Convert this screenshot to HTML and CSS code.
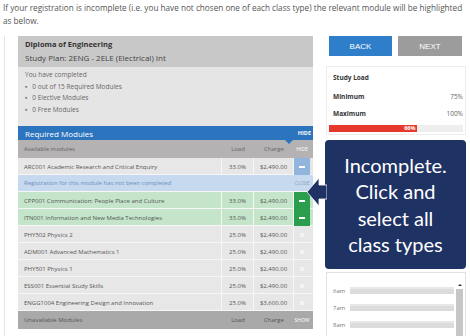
FILE: index.html
```html
<!DOCTYPE html>
<html lang="en">
<head>
  <meta charset="UTF-8">
  <meta name="viewport" content="width=device-width, initial-scale=1.0">
  <title>Study Plan Registration</title>
  <link rel="stylesheet" href="styles.css">
</head>
<body>
  <p class="intro">If your registration is incomplete (i.e. you have not chosen one of each class type) the relevant module will be highlighted as below.</p>

  <div class="layout">
    <div class="plan">
      <div class="plan-head">
        <h3>Diploma of Engineering</h3>
        <p>Study Plan: 2ENG - 2ELE (Electrical) Int</p>
      </div>
      <div class="completed">
        <p>You have completed</p>
        <ul>
          <li>0 out of 15 Required Modules</li>
          <li>0 Elective Modules</li>
          <li>0 Free Modules</li>
        </ul>
      </div>

      <div class="section-bar">
        <span>Required Modules</span>
        <span class="toggle">HIDE</span>
      </div>
      <div class="row head">
        <div class="cell name">Available modules</div>
        <div class="cell num">Load</div>
        <div class="cell num">Charge</div>
        <div class="cell act small">HIDE</div>
      </div>
      <div class="row">
        <div class="cell name">ARC001 Academic Research and Critical Enquiry</div>
        <div class="cell num">33.0%</div>
        <div class="cell num">$2,490.00</div>
        <div class="cell act"><span class="btn minus pending"></span></div>
      </div>
      <div class="row notice">
        <div class="cell name wide">Registration for this module has not been completed</div>
        <div class="cell act small">CLOSE</div>
      </div>
      <div class="row done">
        <div class="cell name">CPP001 Communication: People Place and Culture</div>
        <div class="cell num">33.0%</div>
        <div class="cell num">$2,490.00</div>
        <div class="cell act"><span class="btn minus"></span></div>
      </div>
      <div class="row done">
        <div class="cell name">ITN001 Information and New Media Technologies</div>
        <div class="cell num">33.0%</div>
        <div class="cell num">$2,490.00</div>
        <div class="cell act"><span class="btn minus"></span></div>
      </div>
      <div class="row">
        <div class="cell name">PHY502 Physics 2</div>
        <div class="cell num">25.0%</div>
        <div class="cell num">$2,490.00</div>
        <div class="cell act"><span class="btn add"></span></div>
      </div>
      <div class="row">
        <div class="cell name">ADM001 Advanced Mathematics 1</div>
        <div class="cell num">25.0%</div>
        <div class="cell num">$2,490.00</div>
        <div class="cell act"><span class="btn add"></span></div>
      </div>
      <div class="row">
        <div class="cell name">PHY501 Physics 1</div>
        <div class="cell num">25.0%</div>
        <div class="cell num">$2,490.00</div>
        <div class="cell act"><span class="btn add"></span></div>
      </div>
      <div class="row">
        <div class="cell name">ESS001 Essential Study Skills</div>
        <div class="cell num">25.0%</div>
        <div class="cell num">$2,490.00</div>
        <div class="cell act"><span class="btn add"></span></div>
      </div>
      <div class="row">
        <div class="cell name">ENGG1004 Engineering Design and Innovation</div>
        <div class="cell num">25.0%</div>
        <div class="cell num">$3,600.00</div>
        <div class="cell act"><span class="btn add"></span></div>
      </div>
      <div class="row head unavailable">
        <div class="cell name">Unavailable Modules</div>
        <div class="cell num">Load</div>
        <div class="cell num">Charge</div>
        <div class="cell act small">SHOW</div>
      </div>
    </div>

    <div class="side">
      <div class="nav">
        <button class="nav-btn back">BACK</button>
        <button class="nav-btn next">NEXT</button>
      </div>

      <div class="load">
        <div class="load-row title">Study Load</div>
        <div class="load-row"><span>Minimum</span><span class="val">75%</span></div>
        <div class="load-row"><span>Maximum</span><span class="val">100%</span></div>
        <div class="bar"><div class="bar-fill" style="width: 66%">66%</div></div>
      </div>

      <div class="callout">
        <svg class="callout-arrow" width="20" height="30" viewBox="0 0 20 30">
          <polygon points="0,14 12,0 12,7 20,7 20,21 12,21 12,28" fill="#1f3264" stroke="#ffffff" stroke-width="0.8"/>
        </svg>
        <p>Incomplete. Click and select all class types</p>
      </div>

      <div class="calendar">
        <div class="hours">
          <div class="hour"><span>6am</span><div class="slot"></div></div>
          <div class="hour"><span>7am</span><div class="slot"></div></div>
          <div class="hour"><span>8am</span><div class="slot"></div></div>
        </div>
        <div class="scroll"><span class="scroll-up"></span><span class="thumb"></span></div>
      </div>
    </div>
  </div>
</body>
</html>
```

FILE: styles.css
```css
* {
  margin: 0;
  padding: 0;
  box-sizing: border-box;
}
body {
  font-family: 'Open Sans', sans-serif;
  background-color: #ffffff;
  color: #555;
  width: 470px;
  height: 336px;
  overflow: hidden;
}
.intro {
  font-size: 8.2px;
  line-height: 13px;
  padding: 1px 3px 0;
  margin-bottom: 9px;
  color: #555;
}
.layout {
  display: flex;
  padding-left: 4px;
}
.plan {
  width: 309px;
  padding-left: 13px;
  border-left: 1px solid #e4e4e4;
  padding-bottom: 6px;
}
.plan-head {
  background: #c9c8c8;
  height: 31px;
  padding: 3px 7px 0;
  color: #333;
}
.plan-head h3 {
  font-size: 7.5px;
  line-height: 11px;
  font-weight: 700;
}
.plan-head p {
  font-size: 8px;
  line-height: 15px;
  color: #444;
}
.completed {
  background: #e6e5e5;
  height: 59px;
  padding: 2px 7px 0;
  font-size: 6.5px;
  line-height: 11.5px;
  color: #666;
}
.completed ul {
  list-style: none;
}
.completed li::before {
  content: "\25AA";
  margin-right: 5px;
}
.section-bar {
  position: relative;
  background: #2d74bf;
  height: 14px;
  display: flex;
  justify-content: space-between;
  align-items: center;
  padding: 0 2px 0 7px;
  color: #fff;
  font-size: 8px;
}
.section-bar::after {
  content: "";
  position: absolute;
  left: 267px;
  bottom: -4px;
  border-left: 4px solid transparent;
  border-right: 4px solid transparent;
  border-top: 4px solid #2d74bf;
}
.section-bar .toggle {
  font-size: 5.5px;
  font-weight: 700;
}
.row {
  display: grid;
  grid-template-columns: 204px 32px 40px 16px;
  height: 17px;
  background: #e8e7e7;
  border-bottom: 1px solid #f6f6f6;
  font-size: 6px;
  color: #555;
}
.cell {
  display: flex;
  align-items: center;
  border-right: 1px solid #f6f6f6;
}
.cell.name {
  padding-left: 6px;
}
.cell.wide {
  grid-column: 1 / 4;
}
.cell.num {
  justify-content: center;
}
.cell.act {
  justify-content: center;
  border-right: none;
}
.small {
  font-size: 5px;
  color: #888;
}
.row.head {
  height: 18px;
  background: #b4b2b2;
  color: #666;
  border-bottom: none;
}
.row.head .cell {
  border-right: none;
}
.row.head .small {
  color: #fff;
}
.row.notice {
  background: #c6d9ee;
  color: #6c8fbf;
}
.row.notice .cell {
  border-right: none;
}
.row.notice .small {
  color: #8e9fb3;
}
.row.done {
  background: #c4e5c9;
}
.row.unavailable {
  background: #aaa9a9;
  color: #555;
}
.btn {
  width: 16px;
  height: 17px;
  display: flex;
  align-items: center;
  justify-content: center;
}
.btn.minus {
  background: #2a9e4c;
}
.btn.minus::before {
  content: "";
  width: 6px;
  height: 2px;
  background: #fff;
}
.btn.pending {
  background: #91b5dc;
}
.btn.add::before {
  content: "";
  width: 4px;
  height: 4px;
  background: #f3f3f3;
}
.side {
  width: 141px;
  margin-left: 12px;
}
.nav {
  display: flex;
  gap: 6px;
  padding-left: 4px;
}
.nav-btn {
  height: 20px;
  border: none;
  color: #fff;
  font-family: 'Liberation Sans', Arial, sans-serif;
  font-size: 8px;
}
.nav-btn.back {
  width: 63px;
  background: #2f7ec9;
}
.nav-btn.next {
  width: 64px;
  background: #9c9c9c;
}
.load {
  margin-top: 10px;
  margin-left: 1px;
  border: 1px solid #ececec;
  padding: 0 2px 2px;
  font-size: 6.5px;
  color: #333;
}
.load-row {
  height: 17px;
  display: flex;
  justify-content: space-between;
  align-items: center;
  padding-left: 4px;
  font-weight: 700;
}
.load-row.title {
  height: 21px;
}
.load-row .val {
  font-weight: 400;
  color: #666;
}
.bar {
  height: 7px;
  background: #eeeeee;
  margin-top: 3px;
}
.bar-fill {
  height: 7px;
  background: #e53a2b;
  color: #fff;
  font-size: 5.5px;
  font-weight: 700;
  line-height: 7px;
  text-align: right;
  padding-right: 2px;
}
.callout {
  position: relative;
  margin-top: 5px;
  height: 129px;
  background: #1f3264;
  border-radius: 4px;
  display: flex;
  align-items: center;
  justify-content: center;
  padding: 0 16px;
}
.callout p {
  font-family: 'Lato', sans-serif;
  font-size: 20px;
  line-height: 26.5px;
  color: #fff;
  text-align: center;
}
.callout-arrow {
  position: absolute;
  left: -18px;
  top: 38px;
}
.calendar {
  margin-top: 3px;
  margin-left: 1px;
  height: 70px;
  border: 1px solid #e2e2e2;
  display: flex;
  padding: 9px 2px 0 6px;
}
.hours {
  flex: 1;
}
.hour {
  display: flex;
  align-items: center;
  height: 17px;
  font-size: 6px;
  color: #777;
}
.hour span {
  width: 17px;
}
.slot {
  flex: 1;
  height: 7px;
  background: #dcdcdc;
  border-top: 2px solid #e8e8e8;
}
.scroll {
  width: 7px;
  margin-left: 2px;
  display: flex;
  flex-direction: column;
  align-items: center;
  padding-top: 2px;
}
.scroll-up {
  border-left: 2px solid transparent;
  border-right: 2px solid transparent;
  border-bottom: 2px solid #333;
  margin-bottom: 3px;
}
.thumb {
  width: 7px;
  flex: 1;
  background: #c6c6c6;
}
```
